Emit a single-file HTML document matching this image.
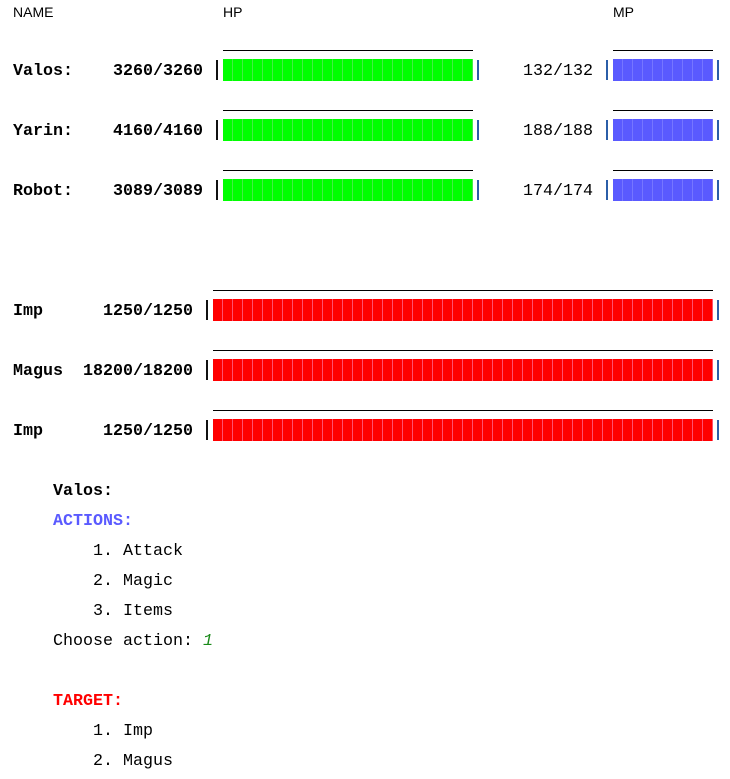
<!DOCTYPE html>
<html><head><style>
body{margin:0;width:730px;height:779px;background:#fff;position:relative;overflow:hidden;font-family:"Liberation Mono",monospace;font-size:16.67px;color:#000}
.t{position:absolute;line-height:20px;white-space:pre;margin-top:1px}
.b{font-weight:bold}
.h{position:absolute;font-family:"Liberation Sans",sans-serif;font-size:14px;top:4px}
.line{position:absolute;height:1px;background:#000}
.bar{position:absolute;height:22px}
.g{background:repeating-linear-gradient(90deg,#00ff00 0,#00ff00 9px,#44ee44 9px,#44ee44 10px)}
.r{background:repeating-linear-gradient(90deg,#ff0000 0,#ff0000 9px,#ff5070 9px,#ff5070 10px)}
.m{background:repeating-linear-gradient(90deg,#5a5aff 0,#5a5aff 9px,#7676ff 9px,#7676ff 10px)}
.pl{position:absolute;width:2px;height:20px;background:#111}
.pb{position:absolute;width:2px;height:20px;background:#2b5ea8}
</style></head><body>
<div class="h" style="left:13px">NAME</div>
<div class="h" style="left:223px">HP</div>
<div class="h" style="left:613px">MP</div>

<div class="t b" style="left:13px;top:61px">Valos:</div>
<div class="t b" style="left:113px;top:61px">3260/3260</div>
<div class="t" style="left:523px;top:61px">132/132</div>
<div class="t b" style="left:13px;top:121px">Yarin:</div>
<div class="t b" style="left:113px;top:121px">4160/4160</div>
<div class="t" style="left:523px;top:121px">188/188</div>
<div class="t b" style="left:13px;top:181px">Robot:</div>
<div class="t b" style="left:113px;top:181px">3089/3089</div>
<div class="t" style="left:523px;top:181px">174/174</div>

<div class="line" style="left:223px;width:250px;top:50px"></div>
<div class="pl" style="left:216px;top:60px"></div><div class="bar g" style="left:223px;width:250px;top:59px"></div><div class="pb" style="left:477px;top:60px"></div>
<div class="line" style="left:613px;width:100px;top:50px"></div>
<div class="pb" style="left:606px;top:60px"></div><div class="bar m" style="left:613px;width:100px;top:59px"></div><div class="pb" style="left:717px;top:60px"></div>

<div class="line" style="left:223px;width:250px;top:110px"></div>
<div class="pl" style="left:216px;top:120px"></div><div class="bar g" style="left:223px;width:250px;top:119px"></div><div class="pb" style="left:477px;top:120px"></div>
<div class="line" style="left:613px;width:100px;top:110px"></div>
<div class="pb" style="left:606px;top:120px"></div><div class="bar m" style="left:613px;width:100px;top:119px"></div><div class="pb" style="left:717px;top:120px"></div>

<div class="line" style="left:223px;width:250px;top:170px"></div>
<div class="pl" style="left:216px;top:180px"></div><div class="bar g" style="left:223px;width:250px;top:179px"></div><div class="pb" style="left:477px;top:180px"></div>
<div class="line" style="left:613px;width:100px;top:170px"></div>
<div class="pb" style="left:606px;top:180px"></div><div class="bar m" style="left:613px;width:100px;top:179px"></div><div class="pb" style="left:717px;top:180px"></div>

<div class="t b" style="left:13px;top:301px">Imp</div>
<div class="t b" style="left:103px;top:301px">1250/1250</div>
<div class="t b" style="left:13px;top:361px">Magus</div>
<div class="t b" style="left:83px;top:361px">18200/18200</div>
<div class="t b" style="left:13px;top:421px">Imp</div>
<div class="t b" style="left:103px;top:421px">1250/1250</div>

<div class="line" style="left:213px;width:500px;top:290px"></div>
<div class="pl" style="left:206px;top:300px"></div><div class="bar r" style="left:213px;width:500px;top:299px"></div><div class="pb" style="left:717px;top:300px"></div>
<div class="line" style="left:213px;width:500px;top:350px"></div>
<div class="pl" style="left:206px;top:360px"></div><div class="bar r" style="left:213px;width:500px;top:359px"></div><div class="pb" style="left:717px;top:360px"></div>
<div class="line" style="left:213px;width:500px;top:410px"></div>
<div class="pl" style="left:206px;top:420px"></div><div class="bar r" style="left:213px;width:500px;top:419px"></div><div class="pb" style="left:717px;top:420px"></div>

<div class="t b" style="left:53px;top:481px">Valos:</div>
<div class="t b" style="left:53px;top:511px;color:#5a5aff">ACTIONS:</div>
<div class="t" style="left:93px;top:541px">1. Attack</div>
<div class="t" style="left:93px;top:571px">2. Magic</div>
<div class="t" style="left:93px;top:601px">3. Items</div>
<div class="t" style="left:53px;top:631px">Choose action: <i style="color:#1a8a1a">1</i></div>
<div class="t b" style="left:53px;top:691px;color:#ff0000">TARGET:</div>
<div class="t" style="left:93px;top:721px">1. Imp</div>
<div class="t" style="left:93px;top:751px">2. Magus</div>
</body></html>
